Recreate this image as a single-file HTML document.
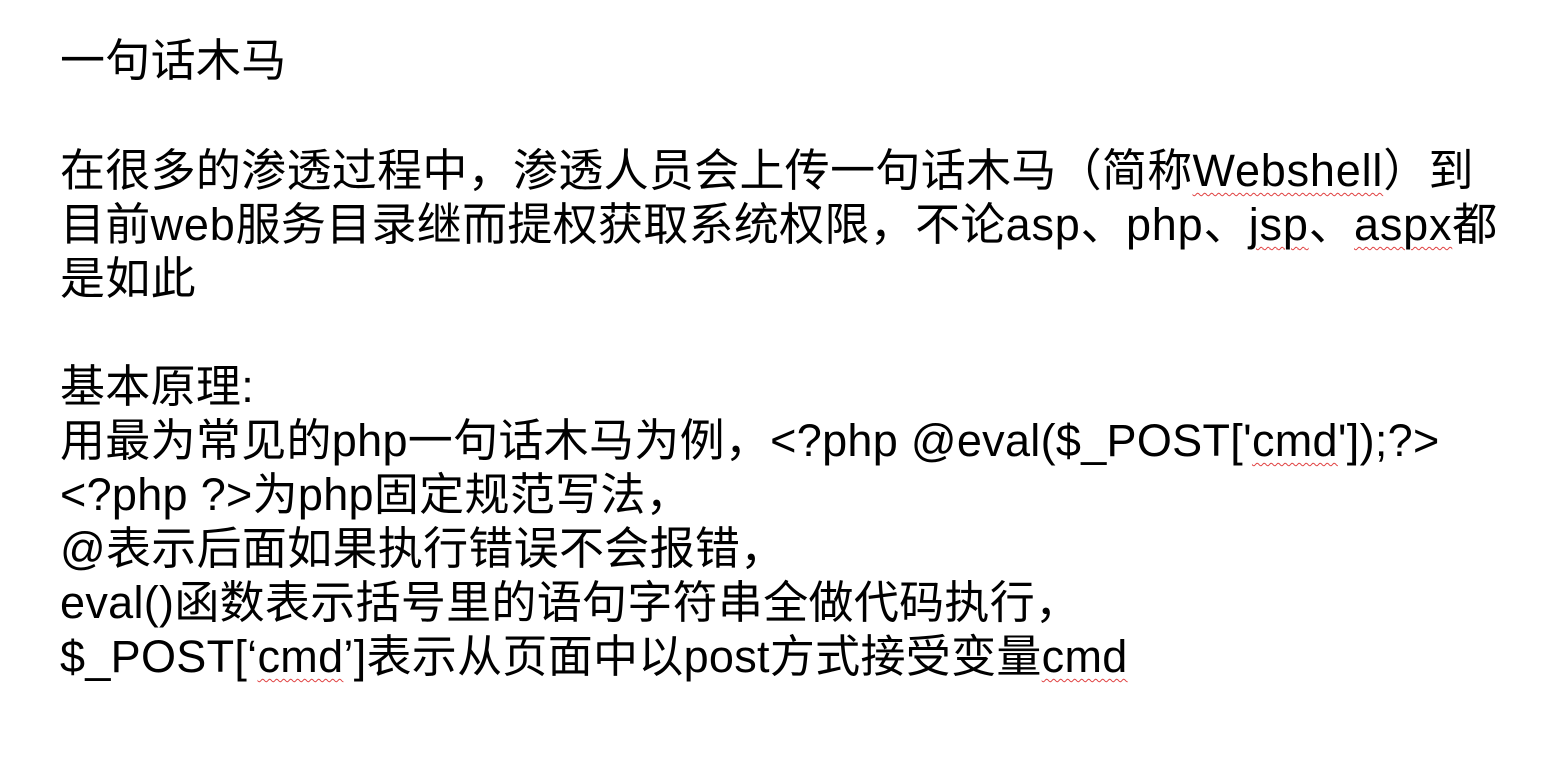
<!DOCTYPE html>
<html><head><meta charset="utf-8"><style>
html,body{margin:0;padding:0;background:#fff;width:1552px;height:771px;overflow:hidden}
.l{position:absolute;left:60px;height:54px;line-height:54px;font-size:45px;color:#000;white-space:nowrap;letter-spacing:0.3px;font-family:"Liberation Sans","Noto Sans CJK SC",sans-serif}
.e{letter-spacing:0.8px}
.w{text-decoration:underline wavy #e04040;text-decoration-thickness:1px;text-underline-offset:6px}
</style></head><body>
<div class="l" style="top:34px">一句话木马</div>
<div class="l" style="top:144px">在很多的渗透过程中，渗透人员会上传一句话木马（简称<span class="w e">Webshell</span>）到</div>
<div class="l" style="top:198px">目前<span class="e">web</span>服务目录继而提权获取系统权限，不论<span class="e">asp</span>、<span class="e">php</span>、<span class="w e">jsp</span>、<span class="w e">aspx</span>都</div>
<div class="l" style="top:252px">是如此</div>
<div class="l" style="top:360px">基本原理:</div>
<div class="l" style="top:414px">用最为常见的php一句话木马为例，&lt;?php @eval($_POST['<span class="w">cmd</span>']);?&gt;</div>
<div class="l" style="top:468px">&lt;?php ?&gt;为php固定规范写法，</div>
<div class="l" style="top:522px">@表示后面如果执行错误不会报错，</div>
<div class="l" style="top:576px">eval()函数表示括号里的语句字符串全做代码执行，</div>
<div class="l" style="top:630px">$_POST[‘<span class="w">cmd</span>’]表示从页面中以post方式接受变量<span class="w">cmd</span></div>
</body></html>
